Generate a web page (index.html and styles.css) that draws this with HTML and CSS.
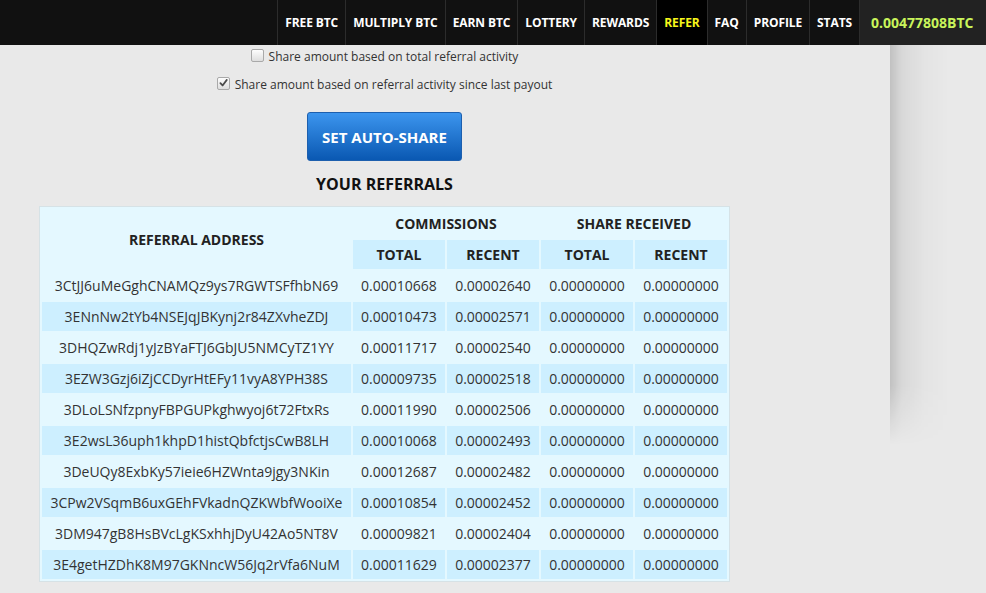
FILE: index.html
```html
<!DOCTYPE html>
<html>
<head>
<meta charset="utf-8">
<link rel="stylesheet" href="styles.css">
</head>
<body>
<header class="topbar">
  <nav class="menu">
    <a class="item">FREE BTC</a>
    <a class="item">MULTIPLY BTC</a>
    <a class="item">EARN BTC</a>
    <a class="item">LOTTERY</a>
    <a class="item">REWARDS</a>
    <a class="item active">REFER</a>
    <a class="item">FAQ</a>
    <a class="item">PROFILE</a>
    <a class="item">STATS</a>
  </nav>
  <div class="balance">0.00477808BTC</div>
</header>
<div class="page">
  <main class="main">
    <div class="content">
      <label class="option">
        <span class="box"></span>
        <span>Share amount based on total referral activity</span>
      </label>
      <label class="option second">
        <span class="box checked"><svg viewBox="0 0 12 12" width="12" height="12"><path d="M2.6 6.2 L5 8.7 L9.6 2.6" fill="none" stroke="#4a4a4a" stroke-width="1.9" stroke-linecap="round" stroke-linejoin="round"/></svg></span>
        <span>Share amount based on referral activity since last payout</span>
      </label>
      <button class="btn">SET AUTO-SHARE</button>
      <h2 class="title">YOUR REFERRALS</h2>
      <table class="refs">
        <colgroup>
          <col class="c-addr"><col class="c-num"><col class="c-num"><col class="c-num"><col class="c-num">
        </colgroup>
        <thead>
          <tr>
            <th rowspan="2" class="plain">REFERRAL ADDRESS</th>
            <th colspan="2" class="plain">COMMISSIONS</th>
            <th colspan="2" class="plain">SHARE RECEIVED</th>
          </tr>
          <tr>
            <th>TOTAL</th><th>RECENT</th><th>TOTAL</th><th>RECENT</th>
          </tr>
        </thead>
        <tbody>
          <tr><td>3CtJJ6uMeGghCNAMQz9ys7RGWTSFfhbN69</td><td>0.00010668</td><td>0.00002640</td><td>0.00000000</td><td>0.00000000</td></tr>
          <tr><td>3ENnNw2tYb4NSEJqJBKynj2r84ZXvheZDJ</td><td>0.00010473</td><td>0.00002571</td><td>0.00000000</td><td>0.00000000</td></tr>
          <tr><td>3DHQZwRdj1yJzBYaFTJ6GbJU5NMCyTZ1YY</td><td>0.00011717</td><td>0.00002540</td><td>0.00000000</td><td>0.00000000</td></tr>
          <tr><td>3EZW3Gzj6iZjCCDyrHtEFy11vyA8YPH38S</td><td>0.00009735</td><td>0.00002518</td><td>0.00000000</td><td>0.00000000</td></tr>
          <tr><td>3DLoLSNfzpnyFBPGUPkghwyoj6t72FtxRs</td><td>0.00011990</td><td>0.00002506</td><td>0.00000000</td><td>0.00000000</td></tr>
          <tr><td>3E2wsL36uph1khpD1histQbfctjsCwB8LH</td><td>0.00010068</td><td>0.00002493</td><td>0.00000000</td><td>0.00000000</td></tr>
          <tr><td>3DeUQy8ExbKy57ieie6HZWnta9jgy3NKin</td><td>0.00012687</td><td>0.00002482</td><td>0.00000000</td><td>0.00000000</td></tr>
          <tr><td>3CPw2VSqmB6uxGEhFVkadnQZKWbfWooiXe</td><td>0.00010854</td><td>0.00002452</td><td>0.00000000</td><td>0.00000000</td></tr>
          <tr><td>3DM947gB8HsBVcLgKSxhhjDyU42Ao5NT8V</td><td>0.00009821</td><td>0.00002404</td><td>0.00000000</td><td>0.00000000</td></tr>
          <tr><td>3E4getHZDhK8M97GKNncW56Jq2rVfa6NuM</td><td>0.00011629</td><td>0.00002377</td><td>0.00000000</td><td>0.00000000</td></tr>
        </tbody>
      </table>
    </div>
  </main>
  <aside class="side"></aside>
</div>
</body>
</html>
```

FILE: styles.css
```css
html, body {
  margin: 0;
  padding: 0;
}
body {
  background: #e9e9e9;
  font-family: "Open Sans", "Liberation Sans", sans-serif;
  color: #333;
  overflow: hidden;
}
.topbar {
  display: flex;
  height: 45px;
  background: #111;
}
.menu {
  flex: 1;
  display: flex;
  justify-content: flex-end;
}
.item {
  display: flex;
  align-items: center;
  padding: 0 7px;
  border-left: 1px solid #2c2c2c;
  color: #fff;
  font-weight: 700;
  font-size: 12px;
  letter-spacing: -0.1px;
  cursor: pointer;
}
.item.active {
  background: #000;
  color: #f7f71b;
}
.balance {
  width: 115px;
  display: flex;
  align-items: center;
  padding-left: 11px;
  background: #222;
  border-left: 1px solid #2c2c2c;
  color: #c9f45b;
  font-weight: 700;
  font-size: 14px;
  white-space: nowrap;
}
.page {
  display: flex;
  min-height: 548px;
}
.main {
  width: 890px;
}
.content {
  width: 769px;
  display: flex;
  flex-direction: column;
  align-items: center;
}
.option {
  height: 22px;
  display: flex;
  align-items: center;
  gap: 5px;
  font-size: 12px;
  color: #333;
}
.option.second {
  margin-top: 6px;
}
.box {
  width: 11px;
  height: 11px;
  border: 1px solid #a9a9a9;
  border-radius: 2px;
  background: linear-gradient(#fdfdfd, #dedede);
  display: flex;
  align-items: center;
  justify-content: center;
  position: relative;
  top: -1px;
}
.box svg {
  display: block;
}
.btn {
  margin-top: 17px;
  width: 155px;
  height: 49px;
  border: 1px solid #1d5fae;
  border-radius: 3px;
  background: linear-gradient(#3c95ee, #0a58b2);
  color: #fff;
  font-family: "Open Sans", "Liberation Sans", sans-serif;
  font-weight: 700;
  font-size: 15px;
  padding: 0;
  cursor: pointer;
}
.title {
  margin: 12px 0 0;
  height: 22px;
  line-height: 22px;
  font-size: 16px;
  font-weight: 700;
  color: #111;
}
.refs {
  margin-top: 11px;
  table-layout: fixed;
  width: 691px;
  border-collapse: separate;
  border-spacing: 2px;
  border: 1px solid #d6e2e6;
  background: #e4f8ff;
}
.c-addr { width: 309px; }
.c-num { width: 92px; }
.refs th {
  padding: 0;
  line-height: 29px;
  font-size: 14px;
  font-weight: 700;
  color: #222;
  background: #cdefff;
}
.refs th.plain {
  background: transparent;
}
.refs td {
  padding: 0;
  line-height: 29px;
  text-align: center;
  font-size: 14px;
  color: #333;
  white-space: nowrap;
}
.refs tbody tr:nth-child(even) td {
  background: #cdefff;
}
.side {
  flex: 1;
  background: linear-gradient(to right, rgba(0,0,0,0.17), rgba(0,0,0,0.07) 12px, rgba(0,0,0,0.02) 35px, rgba(0,0,0,0) 60px);
  -webkit-mask-image: linear-gradient(to bottom, #000 340px, rgba(0,0,0,0) 400px);
  mask-image: linear-gradient(to bottom, #000 340px, rgba(0,0,0,0) 400px);
}
```
